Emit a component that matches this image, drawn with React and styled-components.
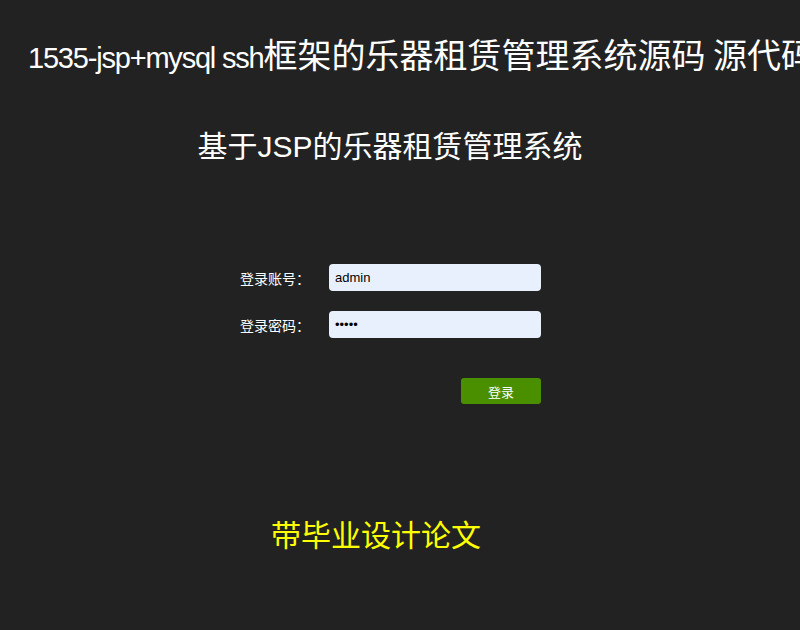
import React from "react";
import styled, { createGlobalStyle } from "styled-components";

const Global = createGlobalStyle`
  html, body { margin: 0; padding: 0; background: #222222; }
  body { width: 800px; height: 630px; overflow: hidden; font-family: "Liberation Sans", "Noto Sans CJK SC", sans-serif; }
`;

const Page = styled.div`
  width: 800px;
  height: 630px;
  background: #222222;
  display: flex;
  flex-direction: column;
  overflow: hidden;
`;

const TopTitle = styled.div`
  margin-top: 32px;
  padding-left: 28px;
  white-space: nowrap;
  overflow: hidden;
  color: #ffffff;
  font-family: "Noto Sans CJK SC", sans-serif;
  font-size: 34px;
  line-height: 44px;
  height: 44px;
`;

const Latin = styled.span`
  font-family: "Liberation Sans", sans-serif;
  font-size: 29px;
  letter-spacing: -1.2px;
`;

const SysTitle = styled.h1`
  margin: 54px 0 0 0;
  padding-right: 20px;
  text-align: center;
  color: #ffffff;
  font-family: "Liberation Sans", "Noto Sans CJK SC", sans-serif;
  font-weight: normal;
  font-size: 30px;
  line-height: 34px;
`;

const Form = styled.form`
  margin: 100px 0 0 240px;
  display: flex;
  flex-direction: column;
  gap: 20px;
`;

const Row = styled.div`
  display: flex;
  align-items: center;
`;

const Label = styled.label`
  width: 89px;
  color: #ffffff;
  font-family: "Noto Sans CJK SC", sans-serif;
  font-size: 14px;
`;

const Input = styled.input`
  box-sizing: border-box;
  width: 212px;
  height: 27px;
  border: none;
  border-radius: 4px;
  background: #e8f0fe;
  color: #000;
  padding: 0 6px;
  font-family: "Liberation Sans", sans-serif;
  font-size: 13px;
  outline: none;
`;

const ButtonRow = styled.div`
  display: flex;
  padding-left: 221px;
  margin-top: 20px;
`;

const Button = styled.button`
  width: 80px;
  height: 26px;
  border: none;
  border-radius: 3px;
  background: #4a8f00;
  color: #ffffff;
  font-family: "Liberation Sans", "Noto Sans CJK SC", sans-serif;
  font-size: 13px;
  cursor: pointer;
`;

const Note = styled.div`
  margin: 109px 0 0 271px;
  color: #ffff00;
  font-family: "Noto Sans CJK SC", sans-serif;
  font-size: 30px;
  line-height: 40px;
`;

export default function App() {
  return (
    <Page>
      <Global />
      <TopTitle>
        <Latin>1535-jsp+mysql ssh</Latin>框架的乐器租赁管理系统源码 源代码
      </TopTitle>
      <SysTitle>基于JSP的乐器租赁管理系统</SysTitle>
      <Form onSubmit={(e) => e.preventDefault()}>
        <Row>
          <Label>登录账号：</Label>
          <Input type="text" defaultValue="admin" />
        </Row>
        <Row>
          <Label>登录密码：</Label>
          <Input type="password" defaultValue="admin" />
        </Row>
        <ButtonRow>
          <Button type="submit">登录</Button>
        </ButtonRow>
      </Form>
      <Note>带毕业设计论文</Note>
    </Page>
  );
}
